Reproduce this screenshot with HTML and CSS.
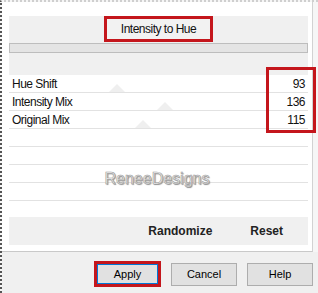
FILE: index.html
```html
<!DOCTYPE html>
<html lang="en">
<head>
  <meta charset="UTF-8">
  <title>Intensity to Hue</title>
  <link rel="stylesheet" href="styles.css">
</head>
<body>
  <div class="window">
    <div class="panel">
      <div class="head-band">
        <div class="title-box">Intensity to Hue</div>
        <div class="progress"></div>
      </div>

      <div class="rows">
        <div class="row">
          <span class="thumb" style="left: 100px"></span>
          <span class="name">Hue Shift</span><span class="value">93</span>
        </div>
        <div class="row">
          <span class="thumb" style="left: 148px"></span>
          <span class="name">Intensity Mix</span><span class="value">136</span>
        </div>
        <div class="row">
          <span class="thumb" style="left: 126px"></span>
          <span class="name">Original Mix</span><span class="value">115</span>
        </div>
        <div class="row"></div>
        <div class="row"></div>
        <div class="row"></div>
        <div class="row"></div>
        <div class="row last"></div>
      </div>

      <div class="tool-band">
        <span class="tool">Randomize</span>
        <span class="tool">Reset</span>
      </div>
    </div>

    <div class="footer">
      <button class="btn apply">Apply</button>
      <button class="btn">Cancel</button>
      <button class="btn">Help</button>
    </div>

    <div class="mark-values"></div>
    <div class="watermark">ReneeDesigns</div>
  </div>
</body>
</html>
```

FILE: styles.css
```css
body {
  margin: 0;
  background: #f0f0f0;
  font-family: "Liberation Sans", Arial, sans-serif;
}
.window {
  position: relative;
  width: 318px;
  height: 293px;
  box-sizing: border-box;
  background: #f6f6f6;
  border-left: 2px dotted #555;
  border-top: 2px dotted #cfcfcf;
  overflow: hidden;
}
.panel {
  width: 311px;
  height: 250px;
  box-sizing: border-box;
  background: #fff;
  border-right: 1px solid #d2d2d2;
  border-bottom: 1px solid #c9c9c9;
  padding: 16px 4px 0 7px;
}
.head-band {
  background: #f0f0f0;
  padding-bottom: 22px;
}
.title-box {
  width: 109px;
  height: 26px;
  box-sizing: border-box;
  margin: -2px auto 0;
  border: 3px solid #c4161c;
  background: #f2f2f2;
  font-size: 12px;
  letter-spacing: -0.5px;
  color: #111;
  display: flex;
  align-items: center;
  justify-content: center;
}
.progress {
  margin-top: 1px;
  height: 10px;
  box-sizing: border-box;
  border: 1px solid #bdbdbd;
  background: #e4e4e4;
}
.rows {
  display: flex;
  flex-direction: column;
}
.row {
  position: relative;
  height: 18px;
  box-sizing: border-box;
  border-bottom: 1px solid #e2e2e2;
  display: flex;
  align-items: center;
  justify-content: space-between;
  padding: 0 3px;
  font-size: 12px;
  letter-spacing: -0.5px;
  color: #111;
}
.row.last {
  height: 16px;
  border-bottom: none;
}
.row .name,
.row .value {
  position: relative;
}
.thumb {
  position: absolute;
  bottom: 0;
  width: 0;
  height: 0;
  border-left: 8px solid transparent;
  border-right: 8px solid transparent;
  border-bottom: 8px solid #efefef;
}
.tool-band {
  height: 28px;
  background: #f0f0f0;
  display: flex;
  align-items: center;
  justify-content: flex-end;
  gap: 38px;
  padding-right: 25px;
  font-size: 12px;
  font-weight: bold;
  color: #222;
}
.footer {
  height: 41px;
  box-sizing: border-box;
  padding: 3px 5px 0 0;
  display: flex;
  align-items: center;
  justify-content: flex-end;
  gap: 10px;
  background: #f0f0f0;
}
.btn {
  width: 66px;
  height: 23px;
  box-sizing: border-box;
  background: #e1e1e1;
  border: 1px solid #adadad;
  font-family: "Liberation Sans", Arial, sans-serif;
  font-size: 11px;
  color: #000;
  padding: 0;
}
.btn.apply {
  width: 67px;
  height: 26px;
  border: 3px solid #c4161c;
  box-shadow: inset 0 0 0 1px #0078d7;
}
.mark-values {
  position: absolute;
  left: 264px;
  top: 65px;
  width: 50px;
  height: 66px;
  box-sizing: border-box;
  border: 3px solid #c4161c;
}
.watermark {
  position: absolute;
  left: 98px;
  top: 168px;
  width: 114px;
  text-align: center;
  font-size: 16px;
  color: #f4f4f4;
  -webkit-text-stroke: 0.6px #9a9a9a;
  text-shadow: 1px 1px 1px #8a8a8a;
}
```
